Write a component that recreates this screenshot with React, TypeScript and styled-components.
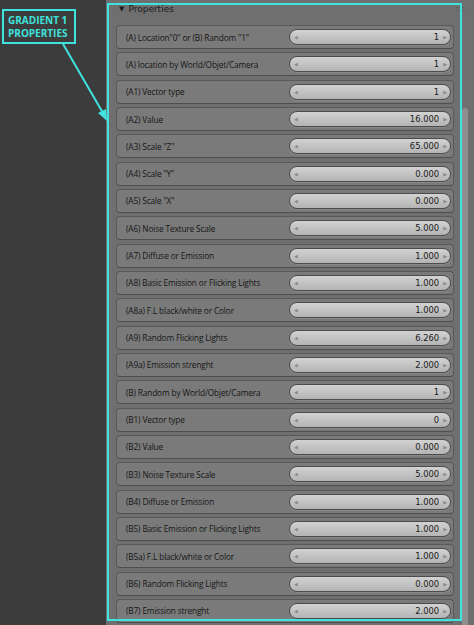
import React from "react";
import styled, { createGlobalStyle } from "styled-components";

const Global = createGlobalStyle`
  html, body { margin: 0; padding: 0; background: #3c3c3c; }
  body { width: 474px; height: 625px; overflow: hidden; font-family: "DejaVu Sans", "Liberation Sans", sans-serif; }
`;

const CYAN = "#3fe2dc";

const Page = styled.div`
  position: relative;
  display: flex;
  width: 474px;
  height: 625px;
  overflow: hidden;
`;

const Sidebar = styled.div`
  width: 106px;
  flex: 0 0 106px;
  background: #3c3c3c;
  padding: 9px 0 0 2px;
  box-sizing: border-box;
`;

const Callout = styled.div`
  width: 74px;
  height: 35px;
  box-sizing: border-box;
  border: 2px solid ${CYAN};
  color: ${CYAN};
  font-family: "Open Sans", "DejaVu Sans", sans-serif;
  font-weight: 700;
  font-size: 10px;
  line-height: 13px;
  padding: 3px 0 0 4px;
`;

const Region = styled.div`
  position: relative;
  flex: 1;
  background: #6f6f6f;
  overflow: hidden;
`;

const Content = styled.div`
  display: flex;
  flex-direction: column;
  gap: 3.33px;
  padding: 0 20px 0 10px;
  margin-top: -2px;
`;

const Header = styled.div`
  display: flex;
  align-items: center;
  height: 21.7px;
  padding: 0 0 2px 3px;
  font-size: 9px;
  color: #1c1c1c;
  gap: 4px;
  box-sizing: content-box;
`;

const Tri = styled.span`
  font-size: 7px;
`;

const Grip = styled.svg`
  margin-left: auto;
  margin-right: -11px;
`;

const Row = styled.div`
  display: flex;
  align-items: center;
  height: 24px;
  box-sizing: border-box;
  border: 1px solid #595959;
  border-bottom-color: #4e4e4e;
  border-radius: 4px;
  background: #7a7a7a;
  padding: 0 2px 0 9px;
`;

const Label = styled.span`
  flex: 0 0 163px;
  font-family: "Open Sans", "DejaVu Sans", sans-serif;
  font-size: 8.3px;
  letter-spacing: -0.15px;
  color: #161616;
  white-space: nowrap;
`;

const Slider = styled.div`
  flex: 1;
  height: 16px;
  box-sizing: border-box;
  border: 1px solid #4c4c4c;
  border-radius: 8px;
  background: linear-gradient(#d2d2d2, #b4b4b4);
  display: flex;
  align-items: center;
  padding: 0 3px 0 4px;
  box-shadow: 0 1px 0 rgba(150,150,150,0.5);
`;

const Arrow = styled.span`
  font-size: 5px;
  color: #8c8c8c;
`;

const Value = styled.span`
  margin-left: auto;
  margin-right: 4px;
  font-size: 8.4px;
  color: #1a1a1a;
`;

const Scrollbar = styled.div`
  position: absolute;
  left: 356px;
  top: 108px;
  width: 6px;
  bottom: -10px;
  border-radius: 3px;
  background: #8f8f8f;
`;

const Outline = styled.div`
  position: absolute;
  left: 107px;
  top: 3px;
  width: 355px;
  height: 618px;
  box-sizing: border-box;
  border: 2px solid ${CYAN};
  pointer-events: none;
`;

const Pointer = styled.svg`
  position: absolute;
  left: 0;
  top: 0;
  pointer-events: none;
`;

const rows: [string, string][] = [
  ['(A) Location"0" or (B) Random "1"', "1"],
  ["(A) location by World/Objet/Camera", "1"],
  ["(A1) Vector type", "1"],
  ["(A2) Value", "16.000"],
  ['(A3) Scale "Z"', "65.000"],
  ['(A4) Scale "Y"', "0.000"],
  ['(A5) Scale "X"', "0.000"],
  ["(A6) Noise Texture Scale", "5.000"],
  ["(A7) Diffuse or Emission", "1.000"],
  ["(A8) Basic Emission or Flicking Lights", "1.000"],
  ["(A8a) F.L black/white or Color", "1.000"],
  ["(A9) Random Flicking Lights", "6.260"],
  ["(A9a) Emission strenght", "2.000"],
  ["(B) Random by World/Objet/Camera", "1"],
  ["(B1) Vector type", "0"],
  ["(B2) Value", "0.000"],
  ["(B3) Noise Texture Scale", "5.000"],
  ["(B4) Diffuse or Emission", "1.000"],
  ["(B5) Basic Emission or Flicking Lights", "1.000"],
  ["(B5a) F.L black/white or Color", "1.000"],
  ["(B6) Random Flicking Lights", "0.000"],
  ["(B7) Emission strenght", "2.000"],
];

export default function App() {
  return (
    <Page>
      <Global />
      <Sidebar>
        <Callout>
          GRADIENT 1
          <br />
          PROPERTIES
        </Callout>
      </Sidebar>
      <Region>
        <Content>
          <Header>
            <Tri>▼</Tri>
            <span>Properties</span>
            <Grip width="9" height="6" viewBox="0 0 9 6">
              {[0, 3, 6].map((x) =>
                [0, 3].map((y) => (
                  <rect key={`${x}-${y}`} x={x + (y ? 1 : 0)} y={y + 1} width="1.5" height="1" fill="#5a5a5a" />
                ))
              )}
            </Grip>
          </Header>
          {rows.map(([label, value]) => (
            <Row key={label}>
              <Label>{label}</Label>
              <Slider>
                <Arrow>◀</Arrow>
                <Value>{value}</Value>
                <Arrow>▶</Arrow>
              </Slider>
            </Row>
          ))}
        </Content>
        <Scrollbar />
      </Region>
      <Outline />
      <Pointer width="474" height="625" viewBox="0 0 474 625">
        <line x1="63" y1="44" x2="103" y2="113" stroke={CYAN} strokeWidth="2" />
        <polygon points="107,121 98,113 106,109" fill={CYAN} />
      </Pointer>
    </Page>
  );
}
